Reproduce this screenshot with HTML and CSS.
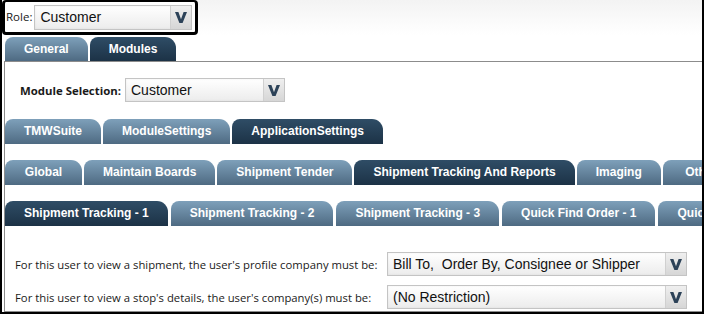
FILE: index.html
```html
<!DOCTYPE html>
<html lang="en">
<head>
  <meta charset="UTF-8" />
  <title>Role Settings</title>
  <link rel="stylesheet" href="styles.css">
</head>
<body>

<div class="frame">
  <div class="top">
    <div class="role-box">
      <span class="role-label">Role:</span>
      <div class="dd dd-role">
        <span class="dd-text">Customer</span>
        <span class="dd-arrow"><svg width="12" height="11" viewBox="0 0 12 11"><polygon points="0,0 3.4,0 6,7.2 8.6,0 12,0 7.6,11 4.4,11" fill="#2c4258"/></svg></span>
      </div>
    </div>
  </div>

  <div class="tabs tabs-top">
    <div class="tab">General</div>
    <div class="tab active">Modules</div>
  </div>

  <div class="panel">
    <div class="module-row">
      <span class="module-label">Module Selection:</span>
      <div class="dd dd-module">
        <span class="dd-text">Customer</span>
        <span class="dd-arrow"><svg width="12" height="11" viewBox="0 0 12 11"><polygon points="0,0 3.4,0 6,7.2 8.6,0 12,0 7.6,11 4.4,11" fill="#2c4258"/></svg></span>
      </div>
    </div>

    <div class="tabs">
      <div class="tab">TMWSuite</div>
      <div class="tab">ModuleSettings</div>
      <div class="tab active">ApplicationSettings</div>
    </div>

    <div class="tabs">
      <div class="tab">Global</div>
      <div class="tab">Maintain Boards</div>
      <div class="tab">Shipment Tender</div>
      <div class="tab active">Shipment Tracking And Reports</div>
      <div class="tab">Imaging</div>
      <div class="tab">Other</div>
    </div>

    <div class="tabs tabs-wide">
      <div class="tab active">Shipment Tracking - 1</div>
      <div class="tab">Shipment Tracking - 2</div>
      <div class="tab">Shipment Tracking - 3</div>
      <div class="tab">Quick Find Order - 1</div>
      <div class="tab">Quick Find Order - 2</div>
    </div>

    <div class="fields">
      <div class="field">
        <span class="field-label">For this user to view a shipment, the user's profile company must be:</span>
        <div class="dd dd-wide">
          <span class="dd-text">Bill To,&nbsp; Order By, Consignee or Shipper</span>
          <span class="dd-arrow"><svg width="12" height="11" viewBox="0 0 12 11"><polygon points="0,0 3.4,0 6,7.2 8.6,0 12,0 7.6,11 4.4,11" fill="#2c4258"/></svg></span>
        </div>
      </div>
      <div class="field">
        <span class="field-label">For this user to view a stop's details, the user's company(s) must be:</span>
        <div class="dd dd-wide">
          <span class="dd-text">(No Restriction)</span>
          <span class="dd-arrow"><svg width="12" height="11" viewBox="0 0 12 11"><polygon points="0,0 3.4,0 6,7.2 8.6,0 12,0 7.6,11 4.4,11" fill="#2c4258"/></svg></span>
        </div>
      </div>
    </div>
  </div>
</div>

</body>
</html>
```

FILE: styles.css
```css
body {
  margin: 0;
  background: #fff;
  font-family: "Liberation Sans", Arial, sans-serif;
  color: #1a1a1a;
}
.frame {
  width: 704px;
  height: 314px;
  box-sizing: border-box;
  border: 2px solid #000;
  border-top: none;
  display: flex;
  flex-direction: column;
  overflow: hidden;
}
.top {
  height: 35px;
  display: flex;
  background: linear-gradient(#f3f3f3, #fff);
}
.role-box {
  width: 196px;
  height: 35px;
  box-sizing: border-box;
  border: 3px solid #000;
  border-top-width: 2px;
  border-radius: 4px;
  display: flex;
  align-items: center;
  padding-left: 1px;
  background: #fff;
}
.role-label {
  font-family: "Open Sans", sans-serif;
  font-size: 11.5px;
  margin-right: 2px;
  align-self: flex-start;
  margin-top: 7px;
}

/* dropdowns */
.dd {
  display: flex;
  height: 24px;
  box-sizing: border-box;
  border: 1px solid #c4c4c4;
  background: linear-gradient(#ffffff, #ececec);
  box-shadow: inset 0 0 2px rgba(0,0,0,0.08);
}
.dd-text {
  flex: 1;
  font-size: 14px;
  line-height: 22px;
  padding-left: 5px;
  color: #111;
  white-space: nowrap;
  overflow: hidden;
}
.dd-arrow {
  width: 20px;
  display: flex;
  align-items: center;
  justify-content: center;
  background: linear-gradient(#efefef, #d6d6d6);
  border-left: 1px solid #d0d0d0;
}
.dd-role {
  width: 158px;
  height: 25px;
}
.dd-module {
  width: 160px;
}
.dd-wide {
  width: 300px;
}

/* tabs */
.tabs {
  display: flex;
  gap: 2px;
  white-space: nowrap;
}
.tabs-wide {
  gap: 3px;
}
.tabs-top {
  margin: 2px 0 0 3px;
}
.tab {
  flex-shrink: 0;
  min-width: 77px;
  box-sizing: border-box;
  text-align: center;
  height: 25px;
  line-height: 25px;
  padding: 0 19px;
  font-size: 12px;
  font-weight: bold;
  color: #fff;
  border-radius: 8px 11px 0 0;
  background: linear-gradient(#7ea0ba, #4e6a82);
}
.tab.active {
  background: linear-gradient(#2f4d66, #1c3246);
}
.tabs-top .tab {
  height: 24px;
  line-height: 24px;
}

.panel {
  flex: 1;
  margin-left: 2px;
  border-top: 1px solid #8c8c8c;
  border-left: 1px solid #8c8c8c;
  border-bottom: 1px solid #8c8c8c;
  overflow: hidden;
}
.panel .tabs {
  margin-top: 16px;
}
.module-row {
  display: flex;
  align-items: center;
  padding: 16px 0 0 15px;
}
.module-label {
  font-family: "Open Sans", sans-serif;
  font-weight: bold;
  font-size: 11.4px;
  width: 105px;
}
.module-row + .tabs {
  margin-top: 17px;
}
.fields {
  padding: 26px 0 0 10px;
  display: flex;
  flex-direction: column;
  gap: 9px;
}
.field {
  display: flex;
  align-items: center;
}
.field-label {
  width: 372px;
  font-family: "Open Sans", sans-serif;
  font-size: 11.3px;
  white-space: nowrap;
}
```
